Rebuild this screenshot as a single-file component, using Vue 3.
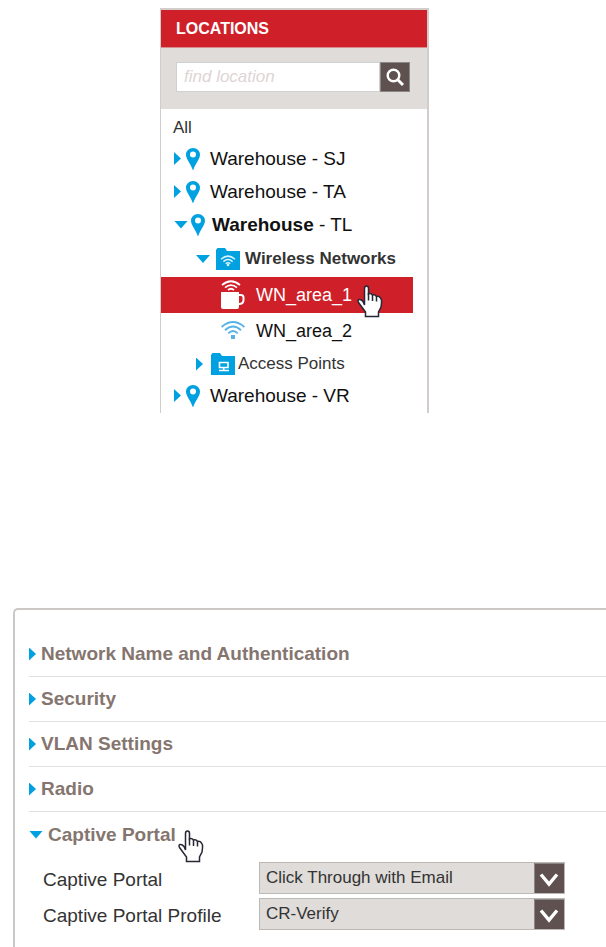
<template>
  <main class="page">
    <section class="locations">
      <h2 class="locations-title">LOCATIONS</h2>
      <form class="search" @submit.prevent>
        <input v-model="keyword" class="search-input" type="text" placeholder="find location" aria-label="find location" />
        <button class="search-button" type="submit" aria-label="Search">
          <svg width="20" height="20" viewBox="0 0 20 20">
            <circle cx="8.5" cy="8.5" r="5.8" fill="none" stroke="#fff" stroke-width="2.4" />
            <path d="M12.8 12.8 L18 18" stroke="#fff" stroke-width="3" />
          </svg>
        </button>
      </form>
      <div class="tree">
        <button
          v-for="node in nodes"
          :key="node.label"
          type="button"
          :class="['node', node.kind, { open: node.open, selected: selected === node.label }]"
          @click="selectNode(node)"
        >
          <span v-if="node.arrow" :class="['arrow', { down: node.open }]"></span>
          <svg v-if="node.icon === 'pin'" class="icon" width="14" height="24" viewBox="0 0 14 24">
            <path d="M7 1 C3 1 0 4 0 7.7 C0 12 4.5 16 7 23.5 C9.5 16 14 12 14 7.7 C14 4 11 1 7 1 Z M7 4.6 A3 3 0 1 1 7 10.6 A3 3 0 1 1 7 4.6 Z" fill="#00a1e0" fill-rule="evenodd" />
          </svg>
          <svg v-else-if="node.icon === 'wifi-folder'" class="icon" width="24" height="22" viewBox="0 0 24 22">
            <path d="M0 2 L1.5 0 H9 L11 3 H24 V22 H0 Z" fill="#00a1e0" />
            <g fill="none" stroke="#d9f2fc" stroke-width="1.5">
              <path d="M5 11.3 Q12 5 19 11.3" />
              <path d="M7.4 13.6 Q12 9.4 16.6 13.6" />
              <path d="M9.7 15.8 Q12 13.7 14.3 15.8" />
            </g>
            <circle cx="12" cy="17" r="1.3" fill="#d9f2fc" />
          </svg>
          <svg v-else-if="node.icon === 'device-folder'" class="icon" width="24" height="22" viewBox="0 0 24 22">
            <path d="M0 2 L1.5 0 H9 L11 3 H24 V22 H0 Z" fill="#00a1e0" />
            <path d="M8.5 9.5 H17 V14.5 H8.5 Z M12.7 14.5 V17 M8 17.5 H18" fill="none" stroke="#fff" stroke-width="1.6" />
          </svg>
          <svg v-else-if="node.icon === 'cup'" class="icon" width="24" height="30" viewBox="0 0 24 30">
            <g fill="none" stroke="#fff" stroke-width="1.8">
              <path d="M1 5 Q10 -2.5 19 5" />
              <path d="M4 7.6 Q10 2.6 16 7.6" />
              <path d="M7 10 Q10 7.4 13 10" />
            </g>
            <path d="M0 12 H18 V27 Q18 29 16 29 H2 Q0 29 0 27 Z" fill="#fff" />
            <path d="M18 15 H20 Q22.5 15 22.5 17.5 V20 Q22.5 24 18 24" fill="none" stroke="#fff" stroke-width="2" />
          </svg>
          <svg v-else-if="node.icon === 'wifi'" class="icon" width="24" height="20" viewBox="0 0 24 20">
            <g fill="none" stroke="#55b4e5" stroke-width="1.9">
              <path d="M0.6 6 Q12 -3.8 23.4 6" />
              <path d="M4 9.2 Q12 2 20 9.2" />
              <path d="M7.3 12.4 Q12 7.8 16.7 12.4" />
            </g>
            <path d="M10 14 H14 V18 H10 Z" fill="#55b4e5" />
          </svg>
          <span v-if="node.region" class="label"><span class="name">{{ node.label }}</span> - {{ node.region }}</span>
          <span v-else class="label">{{ node.label }}</span>
          <svg v-if="node.kind === 'network' && selected === node.label" class="hand hand-tree" width="26" height="33" viewBox="0 0 26 33">
            <path d="M7.5 20 V3.5 Q7.5 1 9.5 1 Q11.5 1 11.5 3.5 V9 Q13.5 7.5 15.5 10 Q18 9 19.5 11.5 Q22 10.8 23.5 13 Q25 14.5 24.5 18 L24 22 L21.5 27 V31.5 H8.5 V27 L1.5 17.5 Q0.3 15 2 14.5 Q4 14 6 16.5 Z" fill="#fff" stroke="#272735" stroke-width="1.5" />
            <path d="M11.5 8 V15.5 M15.5 10 V16 M19.5 11.5 V16.5" stroke="#272735" stroke-width="1.5" />
          </svg>
        </button>
      </div>
    </section>

    <section class="settings">
      <button
        v-for="item in sections"
        :key="item"
        type="button"
        class="section-title"
        :aria-expanded="item === expanded"
        @click="expanded = item"
      >
        <span :class="['arrow', { down: item === expanded }]"></span>
        <span class="section-label">
          {{ item }}
          <svg v-if="item === expanded" class="hand hand-section" width="26" height="33" viewBox="0 0 26 33">
            <path d="M7.5 20 V3.5 Q7.5 1 9.5 1 Q11.5 1 11.5 3.5 V9 Q13.5 7.5 15.5 10 Q18 9 19.5 11.5 Q22 10.8 23.5 13 Q25 14.5 24.5 18 L24 22 L21.5 27 V31.5 H8.5 V27 L1.5 17.5 Q0.3 15 2 14.5 Q4 14 6 16.5 Z" fill="#fff" stroke="#272735" stroke-width="1.5" />
            <path d="M11.5 8 V15.5 M15.5 10 V16 M19.5 11.5 V16.5" stroke="#272735" stroke-width="1.5" />
          </svg>
        </span>
      </button>
      <div class="fields">
        <div v-for="field in fields" :key="field.id" class="field">
          <label :for="field.id">{{ field.label }}</label>
          <div class="select-box">
            <select :id="field.id" v-model="field.value">
              <option>{{ field.value }}</option>
            </select>
            <svg class="chevron" width="30" height="30" viewBox="0 0 30 30">
              <path d="M0 0 H30 V30 H0 Z" fill="#5f514f" />
              <path d="M0.5 30 V0.5 H30" fill="none" stroke="#8b8785" />
              <path d="M7 11.5 L15 21 L23 11.5" fill="none" stroke="#fff" stroke-width="3.4" />
            </svg>
          </div>
        </div>
      </div>
    </section>
  </main>
</template>

<script setup>
import { ref } from 'vue'

const keyword = ref('')
const selected = ref('WN_area_1')
const expanded = ref('Captive Portal')

const nodes = [
  { label: 'All', kind: 'root' },
  { label: 'Warehouse - SJ', kind: 'site', icon: 'pin', arrow: true },
  { label: 'Warehouse - TA', kind: 'site', icon: 'pin', arrow: true },
  { label: 'Warehouse', region: 'TL', kind: 'site', icon: 'pin', arrow: true, open: true },
  { label: 'Wireless Networks', kind: 'folder', icon: 'wifi-folder', arrow: true, open: true },
  { label: 'WN_area_1', kind: 'network', icon: 'cup' },
  { label: 'WN_area_2', kind: 'network', icon: 'wifi' },
  { label: 'Access Points', kind: 'folder', icon: 'device-folder', arrow: true },
  { label: 'Warehouse - VR', kind: 'site', icon: 'pin', arrow: true }
]

const sections = ['Network Name and Authentication', 'Security', 'VLAN Settings', 'Radio', 'Captive Portal']

const fields = ref([
  { id: 'portal', label: 'Captive Portal', value: 'Click Through with Email' },
  { id: 'profile', label: 'Captive Portal Profile', value: 'CR-Verify' }
])

const selectNode = (node) => {
  if (node.kind === 'network') {
    selected.value = node.label
  }
}
</script>

<style>
body {
  margin: 0;
  background: #fff;
}
</style>

<style scoped>
.page {
  display: flex;
  flex-direction: column;
  gap: 195px;
  padding-top: 8px;
  overflow: hidden;
  font-family: "Liberation Sans", Arial, sans-serif;
  font-size: 19px;
  color: #333;
}

button,
input,
select {
  box-sizing: border-box;
  margin: 0;
  border: 0;
  border-radius: 0;
  padding: 0;
  font-family: inherit;
}

button {
  background: none;
  cursor: pointer;
}

.locations {
  box-sizing: border-box;
  width: 269px;
  margin-left: 160px;
  border: 2px solid #d2cdca;
  border-width: 2px 2px 0 1px;
}

.locations-title {
  margin: 0;
  padding-left: 15px;
  border-bottom: 1px solid #d98c8c;
  background: #cf2029;
  color: #fff;
  font-size: 16px;
  line-height: 37px;
}

.search {
  display: flex;
  padding: 14px 17px 17px 15px;
  background: #dfdcd9;
}

.search-input {
  flex: 1;
  min-width: 0;
  height: 30px;
  padding-left: 7px;
  border: 1px solid #cfd1d2;
  background: #fff;
  font-size: 17px;
}

.search-input::placeholder {
  color: #ddd5d5;
  font-style: italic;
  opacity: 1;
}

.search-button {
  display: flex;
  align-items: center;
  justify-content: center;
  width: 30px;
  height: 30px;
  border: 1px solid #8b8785;
  background: #5f514f;
}

.tree {
  display: flex;
  flex-direction: column;
  padding: 5px 0 1px;
}

.node {
  position: relative;
  display: flex;
  align-items: center;
  height: 33px;
  padding-left: 13px;
  color: #111;
  font-size: 19px;
  white-space: nowrap;
}

.node.root {
  height: 28px;
  padding-left: 12px;
  color: #333;
  font-size: 17px;
}

.arrow {
  flex: none;
  width: 7px;
  height: 13px;
  background: #00a1e0;
  clip-path: polygon(0 0, 100% 50%, 0 100%);
}

.arrow.down {
  width: 14px;
  height: 8px;
  clip-path: polygon(0 0, 100% 0, 50% 100%);
}

.icon {
  flex: none;
}

.site .icon {
  margin: 0 10px 0 5px;
}

.site.open .icon {
  margin: 0 7px 0 3px;
}

.site.open .name,
.folder.open {
  font-weight: bold;
}

.node.folder {
  height: 30px;
  padding-left: 35px;
  color: #333;
  font-size: 17px;
}

.node.folder.open {
  height: 36px;
}

.folder .icon {
  margin: 0 3px 0 8px;
}

.folder.open .icon {
  margin: 0 5px 0 6px;
}

.node.network {
  gap: 11px;
  height: 36px;
  margin-right: 14px;
  padding-left: 60px;
  font-size: 18px;
}

.node.network.selected {
  background: #cf2029;
  color: #fff;
}

.hand {
  position: absolute;
  z-index: 1;
}

.hand-tree {
  top: 8px;
  right: 30px;
}

.settings {
  margin-left: 13px;
  padding: 22px 0 24px 14px;
  border: 2px solid #ccc8c6;
  border-right: 0;
  border-bottom: 0;
  border-top-left-radius: 5px;
}

.section-title {
  display: flex;
  align-items: center;
  gap: 5px;
  width: 100%;
  height: 45px;
  border-bottom: 1px solid #e2dfdd;
  color: #85756f;
  font-size: 19px;
  font-weight: bold;
}

.section-title:last-of-type {
  border-bottom: 0;
}

.section-label {
  position: relative;
}

.hand-section {
  top: 6px;
  left: calc(100% + 2px);
}

.fields {
  display: flex;
  flex-direction: column;
  gap: 4px;
  padding: 5px 41px 0 14px;
}

.field {
  display: grid;
  grid-template-columns: 216px 1fr;
  align-items: center;
}

.field label {
  padding-top: 3px;
}

.select-box {
  position: relative;
  display: flex;
}

.select-box select {
  width: 100%;
  height: 32px;
  padding: 0 32px 2px 6px;
  border: 1px solid #bbb8b6;
  background: #dfdcd9;
  color: #333;
  font-size: 17px;
  appearance: none;
}

.chevron {
  position: absolute;
  top: 1px;
  right: 1px;
  pointer-events: none;
}
</style>
